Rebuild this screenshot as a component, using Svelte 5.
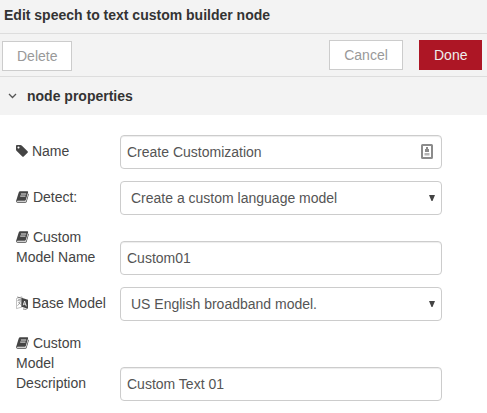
<script>
  const rows = [
    { icon: 'tag', label: 'Name', value: 'Create Customization', kind: 'text', contact: true },
    { icon: 'book', label: 'Detect:', value: 'Create a custom language model', kind: 'select' },
    { icon: 'book', label: 'Custom Model Name', value: 'Custom01', kind: 'text' },
    { icon: 'language', label: 'Base Model', value: 'US English broadband model.', kind: 'select' },
    { icon: 'book', label: 'Custom Model Description', value: 'Custom Text 01', kind: 'text' }
  ];
</script>

<div class="editor">
  <header>Edit speech to text custom builder node</header>
  <div class="toolbar">
    <button class="delete">Delete</button>
    <div class="right">
      <button>Cancel</button>
      <button class="primary">Done</button>
    </div>
  </div>
  <div class="section">
    <svg width="9" height="6" viewBox="0 0 9 6"><path d="M1 1l3.5 3.5L8 1" fill="none" stroke="#555" stroke-width="1.3" /></svg>
    <span>node properties</span>
  </div>
  <form>
    {#each rows as row}
      <div class="row">
        <div class="label">
          {#if row.icon === 'tag'}
            <svg class="icon tag" viewBox="128 128 1536 1536"><path d="M576 448q0-53-37.500-90.500t-90.500-37.500-90.500 37.500-37.500 90.500 37.500 90.500 90.500 37.500 90.500-37.500 37.500-90.500zm1067 576q0 53-37 90l-491 492q-39 37-91 37-53 0-90-37l-715-716q-38-37-64.500-101t-26.500-117v-416q0-52 38-90t90-38h416q53 0 117 26.500t102 64.500l715 714q37 39 37 91z" /></svg>
          {:else if row.icon === 'book'}
            <svg class="icon book" viewBox="0 0 13 12">
              <path d="M4.200.3h7.300q.8 0 .6.900L9.900 8.800q-.3.900-1.100.9H1.600q-.7.100-.7.500 0 .6 1 .6h7.500q.5 0 .7-.5L12.400 2.500q.6.300.4 1L10.700 10.700q-.3 1.100-1.400 1.100H1.800Q.5 11.800.2 10.600 0 9.800.4 8.900L2.700 1.500Q3.100.3 4.200.3z" />
              <path d="M4.900 3h5.300M4.200 5.100h5.300" fill="none" stroke="#fff" stroke-width=".9" />
            </svg>
          {:else}
            <svg class="icon language" viewBox="0 0 12 14">
              <path d="M.5 2.500L6 .8V11L.5 12.600z" fill="#fff" stroke="#999" stroke-width=".6" />
              <path d="M1.500 4.500l3.500-1M3 3v1.500M4.400 4.300C4 7 3 8.500 1.500 9.500M2.200 5.800l2.800 3" fill="none" stroke="#777" stroke-width=".7" />
              <path d="M1.200 1l4 1.200M7 13l3 .4 1-.9" fill="none" stroke="#555" stroke-width=".7" />
              <path d="M5.400 1.800L12 3.800v9L5.400 10.800z" />
              <path d="M7.200 9.300L8.600 5l1.700 5.300M7.700 7.900l2 .6" fill="none" stroke="#fff" stroke-width=".8" />
            </svg>
          {/if}
          {row.label}
        </div>
        <div class="field {row.kind}">
          <span>{row.value}</span>
          {#if row.contact}
            <svg class="contact" width="12" height="15" viewBox="0 0 12 15">
              <rect x="1" y="1" width="10" height="13" rx=".5" fill="#fff" stroke="#8b8b8b" stroke-width="2" />
              <path d="M5 3h2v2h1v3H4V5h1z" fill="#8b8b8b" />
              <path d="M3.500 9h5v2.500h-5z" fill="#b5b5b5" />
            </svg>
          {:else if row.kind === 'select'}
            <svg class="arrow" width="6" height="6" viewBox="0 0 6 6"><path d="M0 0h6L3.500 6h-1z" fill="#444" /></svg>
          {/if}
        </div>
      </div>
    {/each}
  </form>
</div>

<style>
  :global(body) { background: #fff; }
  .editor {
    width: 487px;
    height: 413px;
    overflow: hidden;
    box-sizing: border-box;
    font: 14px/20px "Liberation Sans", Arial, sans-serif;
    color: #444;
    background: #fff;
  }
  header {
    height: 33px;
    box-sizing: border-box;
    padding: 5px 4px;
    font-weight: bold;
    color: #333;
    background: #f3f3f3;
  }
  .toolbar {
    display: flex;
    justify-content: space-between;
    height: 44px;
    box-sizing: border-box;
    padding: 6px 5px 0 2px;
    border-top: 1px solid #ddd;
    border-bottom: 1px solid #ddd;
    background: #f3f3f3;
  }
  button {
    box-sizing: border-box;
    height: 30px;
    padding: 0 14px;
    border: 1px solid #ccc;
    border-radius: 0;
    background: #fff;
    color: #999;
    font: inherit;
  }
  .delete { margin-top: 1px; width: 70px; }
  .right { display: flex; gap: 16px; align-items: flex-start; }
  .right button { width: 74px; }
  .right .primary { width: 63px; background: #ad1625; border-color: #ad1625; color: #eee; }
  .section {
    display: flex;
    align-items: center;
    gap: 10px;
    height: 38px;
    padding-left: 8px;
    background: #f3f3f3;
    color: #333;
    font-weight: bold;
  }
  form {
    display: flex;
    flex-direction: column;
    gap: 12px;
    padding: 20px 0 0 16px;
  }
  .row { display: flex; align-items: flex-end; }
  .label { width: 96px; padding-bottom: 8px; margin-right: 8px; }
  .icon { fill: #444; }
  .tag { width: 12px; height: 12px; vertical-align: -1px; }
  .book { width: 13px; height: 12px; vertical-align: -1px; }
  .language { width: 12px; height: 14px; vertical-align: -2px; }
  .field {
    display: flex;
    align-items: center;
    justify-content: space-between;
    box-sizing: border-box;
    width: 322px;
    height: 34px;
    padding: 0 8px 0 6px;
    border: 1px solid #ccc;
    border-radius: 4px;
    color: #555;
    background: #fff;
  }
  .contact { margin-bottom: 1px; }
  .text { box-shadow: inset 0 1px 1px rgba(0, 0, 0, 0.075); }
  .select { padding: 0 6px 0 10px; }
</style>
